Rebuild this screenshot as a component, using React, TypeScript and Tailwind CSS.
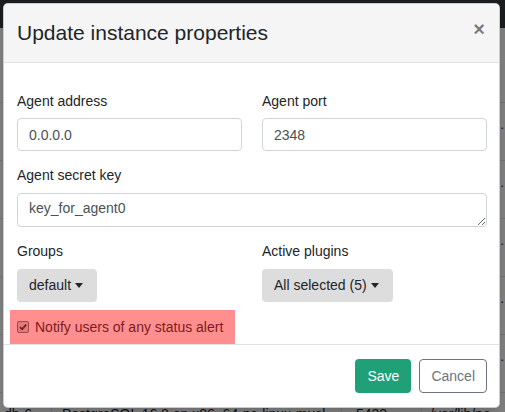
import React from 'react';

const rows = [
  { host: 'db-1.fqdn', version: 'PostgreSQL 16.8 on x86_64-pc-linux-musl,', port: '5432', data: '/var/lib/postgresql/data' },
  { host: 'db-2.fqdn', version: 'PostgreSQL 15.4 on x86_64-pc-linux-gnu,', port: '5432', data: '/var/lib/postgresql/data' },
  { host: 'db-3.fqdn', version: 'PostgreSQL 14.9 on x86_64-pc-linux-gnu,', port: '5433', data: '/var/lib/postgresql/data' },
  { host: 'db-4.fqdn', version: 'PostgreSQL 16.2 on x86_64-pc-linux-musl,', port: '5432', data: '/var/lib/postgresql/data' },
  { host: 'db-5.fqdn', version: 'PostgreSQL 13.12 on x86_64-pc-linux-gnu,', port: '5432', data: '/var/lib/postgresql/data' },
  { host: 'db-6.fqdn', version: 'PostgreSQL 16.8 on x86_64-pc-linux-musl,', port: '5432', data: '/var/lib/postgresql/data' },
];

const Caret = () => (
  <span className="ml-[4px] inline-block h-0 w-0 border-x-[4px] border-t-[5px] border-x-transparent border-t-[#212529] align-middle" />
);

const App: React.FC = () => {
  return (
    <div
      className="relative h-[412px] w-[505px] overflow-hidden bg-white text-[14px] text-[#212529]"
      style={{ fontFamily: '"Liberation Sans", Arial, sans-serif' }}
    >
      {/* Page behind the modal */}
      <div className="h-[28px] bg-[#343a40]" />
      <div className="pt-[74px]">
        {rows.map((r, i) => (
          <div key={i} className="grid h-[58px] grid-cols-[52px_290px_80px_1fr] border-t border-[#dee2e6]">
            <div className="truncate border-r border-[#dee2e6] pl-[4px] pt-[11px]">{r.host}</div>
            <div className="border-r border-[#dee2e6] pl-[10px] pt-[11px]">{r.version}</div>
            <div className="border-r border-[#dee2e6] pl-[14px] pt-[11px]">{r.port}</div>
            <div className="truncate pl-[8px] pt-[11px]">{r.data}</div>
          </div>
        ))}
      </div>

      {/* Backdrop */}
      <div className="absolute inset-0 bg-black/50" />

      {/* Modal */}
      <div className="absolute left-[3px] top-[3px] w-[497px] overflow-hidden rounded-[5px] border border-black/20 bg-white shadow-lg">
        {/* Header */}
        <div className="flex h-[59px] items-center justify-between border-b border-[#dee2e6] bg-[#f5f5f5] pl-[13px] pr-[14px]">
          <h5 className="text-[21px] leading-[1.5] text-[#212529]">Update instance properties</h5>
          <button className="mb-[9px] text-[20px] font-bold leading-none text-black/50">×</button>
        </div>

        {/* Body */}
        <div className="pl-[13px] pr-[12px] pt-[28px]">
          <div className="grid grid-cols-2 gap-[20px]">
            <div className="mb-[14px]">
              <label className="mb-[7px] block leading-[20px]">Agent address</label>
              <input
                readOnly
                value="0.0.0.0"
                className="block h-[33px] w-full rounded-[4px] border border-[#ced4da] bg-white px-[11px] text-[14px] text-[#495057] outline-none"
              />
            </div>
            <div className="mb-[14px]">
              <label className="mb-[7px] block leading-[20px]">Agent port</label>
              <input
                readOnly
                value="2348"
                className="block h-[33px] w-full rounded-[4px] border border-[#ced4da] bg-white px-[11px] text-[14px] text-[#495057] outline-none"
              />
            </div>
          </div>

          <div className="mb-[14px]">
            <label className="mb-[8px] block leading-[20px]">Agent secret key</label>
            <textarea
              readOnly
              rows={1}
              value="key_for_agent0"
              className="block h-[34px] w-full rounded-[4px] border border-[#ced4da] bg-white px-[11px] pt-[4px] text-[14px] leading-[21px] text-[#495057] outline-none"
            />
          </div>

          <div className="grid grid-cols-2 gap-[20px]">
            <div>
              <label className="mb-[8px] block leading-[20px]">Groups</label>
              <button className="flex h-[33px] items-center rounded-[4px] bg-[#dddddd] pl-[12px] pr-[14px] text-[14px] text-[#212529]">
                default
                <Caret />
              </button>
            </div>
            <div>
              <label className="mb-[8px] block leading-[20px]">Active plugins</label>
              <button className="flex h-[33px] items-center rounded-[4px] bg-[#dddddd] pl-[12px] pr-[14px] text-[14px] text-[#212529]">
                All selected (5)
                <Caret />
              </button>
            </div>
          </div>

          <div className="-ml-[7px] mt-[8px] flex h-[34px] w-fit items-center bg-[#ff8f8f] pl-[7px] pr-[12px]">
            <span className="flex h-[12px] w-[12px] items-center justify-center rounded-[2px] border border-[#a04848] bg-[#e07c7c]">
              <svg width="10" height="10" viewBox="0 0 10 10">
                <path d="M2 5.2 L4.1 7.3 L8.2 2.6" fill="none" stroke="#7a1c1c" strokeWidth="1.8" />
              </svg>
            </span>
            <span className="ml-[6px] text-[#7d1a1c]">Notify users of any status alert</span>
          </div>
        </div>

        {/* Footer */}
        <div className="flex justify-end gap-[8px] border-t border-[#dee2e6] py-[14px] pr-[12px]">
          <button className="h-[34px] rounded-[4px] bg-[#20a077] px-[12px] text-[14px] text-white">Save</button>
          <button className="h-[34px] rounded-[4px] border border-[#6c757d] bg-white px-[11px] text-[14px] text-[#6c757d]">
            Cancel
          </button>
        </div>
      </div>
    </div>
  );
};

export default App;
